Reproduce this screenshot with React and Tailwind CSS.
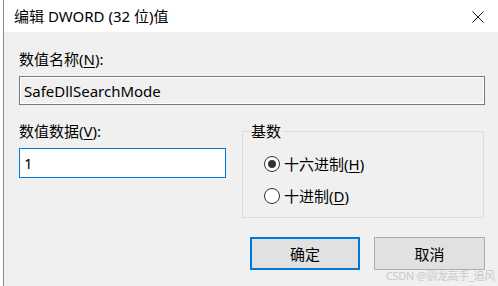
import React, { useState } from 'react';

const FONT = { fontFamily: "'Segoe UI', 'Noto Sans', 'Noto Sans CJK SC', sans-serif" };

export default function App() {
  const [radix, setRadix] = useState('hex');
  const [value, setValue] = useState('1');

  return (
    <div className="relative w-[498px] h-[286px] overflow-hidden bg-white flex text-black" style={FONT}>
      <div className="w-[3px] bg-white shrink-0" />
      <div className="flex-1 flex flex-col border-l border-[#8a8a8a]">
        {/* title bar */}
        <div className="h-[32px] bg-white flex items-center justify-between pl-[10px] pr-[14px] shrink-0">
          <span className="text-[15px] leading-[20px]">编辑 DWORD (32 位)值</span>
          <svg width="12" height="12" viewBox="0 0 12 12" className="mt-[1px]">
            <path d="M0.5 0.5 L11.5 11.5 M11.5 0.5 L0.5 11.5" stroke="#111" strokeWidth="1" fill="none" />
          </svg>
        </div>

        {/* body */}
        <div className="flex-1 bg-[#f0f0f0] pl-[15px] pr-[13px] pt-[17px] text-[15px] leading-[20px]">
          <div>
            数值名称(<span className="underline underline-offset-2">N</span>):
          </div>
          <div className="mt-[7px] h-[29px] border border-[#7a7a7a]">
            <div className="h-full w-full border border-white pl-[3px] flex items-center">
              SafeDllSearchMode
            </div>
          </div>

          <div className="mt-[16px] grid grid-cols-[207px_242px] gap-x-[16px]">
            <div>
              <div>
                数值数据(<span className="underline underline-offset-2">V</span>):
              </div>
              <input
                value={value}
                onChange={(e) => setValue(e.target.value)}
                className="mt-[7px] h-[30px] w-full bg-white border border-[#0078d7] px-[4px] outline-none text-[15px]"
              />
            </div>

            <fieldset className="border border-[#dcdcdc] h-[97px] p-0 m-0">
              <legend className="ml-[7px] px-[1px]">基数</legend>
              <RadioRow
                checked={radix === 'hex'}
                onClick={() => setRadix('hex')}
                className="mt-[13px]"
                label={<>十六进制(<span className="underline underline-offset-2">H</span>)</>}
              />
              <RadioRow
                checked={radix === 'dec'}
                onClick={() => setRadix('dec')}
                className="mt-[12px]"
                label={<>十进制(<span className="underline underline-offset-2">D</span>)</>}
              />
            </fieldset>
          </div>

          <div className="mt-[19px] flex justify-end gap-[14px]">
            <button className="w-[110px] h-[33px] bg-[#e1e1e1] border-2 border-[#0078d7] text-[15px]">确定</button>
            <button className="w-[111px] h-[33px] bg-[#e1e1e1] border border-[#adadad] text-[15px]">取消</button>
          </div>
        </div>
      </div>

      <span className="absolute right-[3px] bottom-[4px] text-[11px] leading-[12px] tracking-[-0.3px] text-[#cacaca]">CSDN @驯龙高手_追风</span>
    </div>
  );
}

const RadioRow = ({ checked, onClick, label, className = '' }) => (
  <div className={`flex items-center gap-[4px] ml-[21px] cursor-default ${className}`} onClick={onClick}>
    <span className="w-[16px] h-[16px] rounded-full border-[1.5px] border-[#333] bg-white flex items-center justify-center shrink-0">
      {checked && <span className="w-[8px] h-[8px] rounded-full bg-[#333]" />}
    </span>
    <span>{label}</span>
  </div>
);
